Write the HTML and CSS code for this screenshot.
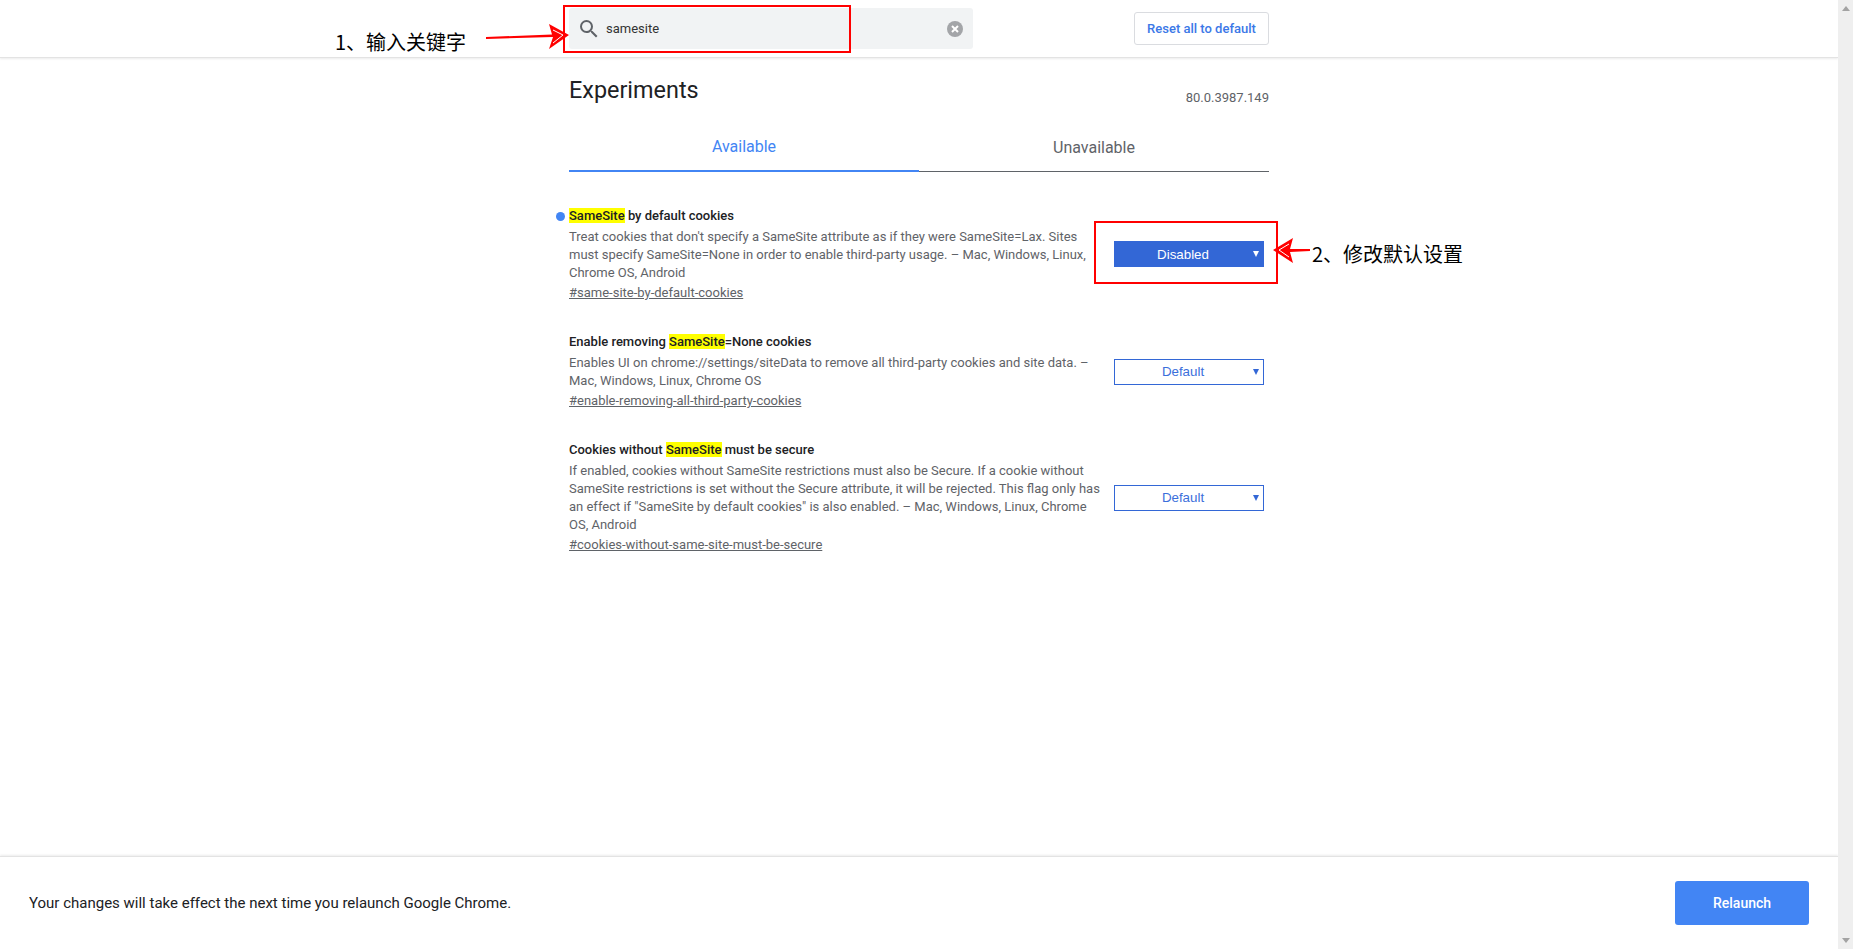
FILE: index.html
```html
<!DOCTYPE html>
<html lang="en">
<head>
  <meta charset="UTF-8">
  <meta name="viewport" content="width=device-width, initial-scale=1.0">
  <title>Experiments</title>
  <link rel="stylesheet" href="styles.css">
</head>
<body>
  <div class="window">
    <div class="page">
      <header class="head">
        <div class="wrap head-row">
          <div class="search">
            <svg class="search-icon" viewBox="0 0 24 24" width="24" height="24"><path d="M15.5 14h-.79l-.28-.27A6.471 6.471 0 0 0 16 9.5 6.5 6.5 0 1 0 9.5 16c1.61 0 3.09-.59 4.23-1.57l.27.28v.79l5 4.99L20.49 19l-4.99-5zm-6 0C7.01 14 5 11.99 5 9.5S7.01 5 9.5 5 14 7.01 14 9.5 11.99 14 9.5 14z"/></svg>
            <span class="search-text">samesite</span>
            <svg class="clear-icon" viewBox="0 0 16 16" width="16" height="16"><circle cx="8" cy="8" r="8"/><path d="M5 5l6 6M11 5l-6 6"/></svg>
          </div>
          <button class="reset" type="button">Reset all to default</button>
        </div>
      </header>

      <main class="wrap content">
        <div class="title-row">
          <h1>Experiments</h1>
          <span class="version">80.0.3987.149</span>
        </div>
        <div class="tabs">
          <div class="tab active">Available</div>
          <div class="tab">Unavailable</div>
        </div>

        <div class="experiments">
          <section class="experiment">
            <div class="info">
              <h2><span class="dot"></span><mark>SameSite</mark> by default cookies</h2>
              <p>Treat cookies that don't specify a SameSite attribute as if they were SameSite=Lax. Sites must specify SameSite=None in order to enable third-party usage. – Mac, Windows, Linux, Chrome OS, Android</p>
              <a href="#same-site-by-default-cookies">#same-site-by-default-cookies</a>
            </div>
            <div class="picker">
              <select class="on">
                <option>Disabled</option>
              </select>
            </div>
          </section>

          <section class="experiment">
            <div class="info">
              <h2>Enable removing <mark>SameSite</mark>=None cookies</h2>
              <p>Enables UI on chrome://settings/siteData to remove all third-party cookies and site data. – Mac, Windows, Linux, Chrome OS</p>
              <a href="#enable-removing-all-third-party-cookies">#enable-removing-all-third-party-cookies</a>
            </div>
            <div class="picker">
              <select>
                <option>Default</option>
              </select>
            </div>
          </section>

          <section class="experiment">
            <div class="info">
              <h2>Cookies without <mark>SameSite</mark> must be secure</h2>
              <p>If enabled, cookies without SameSite restrictions must also be Secure. If a cookie without SameSite restrictions is set without the Secure attribute, it will be rejected. This flag only has an effect if "SameSite by default cookies" is also enabled. – Mac, Windows, Linux, Chrome OS, Android</p>
              <a href="#cookies-without-same-site-must-be-secure">#cookies-without-same-site-must-be-secure</a>
            </div>
            <div class="picker">
              <select>
                <option>Default</option>
              </select>
            </div>
          </section>
        </div>
      </main>

      <footer class="foot">
        <span>Your changes will take effect the next time you relaunch Google Chrome.</span>
        <button class="relaunch" type="button">Relaunch</button>
      </footer>
    </div>

    <div class="scrollbar">
      <span class="arrow-up"></span>
      <span class="arrow-down"></span>
    </div>
  </div>

  <!-- red notes drawn on top of the screenshot -->
  <div class="note-box box-search"></div>
  <div class="note-box box-select"></div>
  <span class="note note-1">1、输入关键字</span>
  <span class="note note-2">2、修改默认设置</span>
  <svg class="note-arrows" width="1853" height="949" viewBox="0 0 1853 949">
    <path class="fill" d="M486 37 L552 34.5 L549 24 L569 35 L549 49 L553 37 L486 39 Z"/>
    <path class="cut" d="M553 30 L563 35 L553 43"/>
    <path class="fill" d="M1310 249 L1290 249 L1293 238 L1273 250 L1293 263 L1290 252 L1310 251 Z"/>
    <path class="cut" d="M1289 244 L1279 250 L1289 257"/>
  </svg>
</body>
</html>
```

FILE: styles.css
```css
* {
  box-sizing: border-box;
}
body {
  margin: 0;
  font-family: Roboto, "Liberation Sans", sans-serif;
  font-size: 13px;
  color: #202124;
  background: #fff;
  overflow: hidden;
}
.window {
  display: flex;
  height: 100vh;
}
.page {
  flex: 1;
  display: flex;
  flex-direction: column;
  min-width: 0;
}
.wrap {
  width: 700px;
  margin: 0 auto;
}

/* top bar */
.head {
  height: 58px;
  padding-top: 8px;
  border-bottom: 1px solid #e3e3e3;
  box-shadow: 0 1px 2px rgba(0, 0, 0, 0.08);
}
.head-row {
  display: flex;
  align-items: center;
  justify-content: space-between;
}
.search {
  display: flex;
  align-items: center;
  width: 404px;
  height: 41px;
  padding: 0 10px 0 8px;
  background: #f1f3f4;
  border-radius: 3px;
}
.search-icon {
  fill: #5f6368;
}
.search-text {
  margin-left: 5px;
  flex: 1;
  color: #333;
}
.clear-icon circle {
  fill: #a3a5a8;
}
.clear-icon path {
  stroke: #fff;
  stroke-width: 2;
  fill: none;
}
.reset {
  width: 135px;
  height: 33px;
  padding: 0;
  font-family: inherit;
  font-size: 13px;
  font-weight: 500;
  color: #3b78e7;
  background: #fff;
  border: 1px solid #dadce0;
  border-radius: 3px;
}

/* heading and tabs */
.title-row {
  display: flex;
  justify-content: space-between;
  align-items: flex-end;
  padding-top: 16px;
}
h1 {
  margin: 0;
  font-size: 23.4px;
  font-weight: 400;
  line-height: 32px;
}
.version {
  line-height: 16px;
  color: #5f6368;
}
.tabs {
  display: flex;
  margin-top: 14px;
}
.tab {
  flex: 1;
  height: 52px;
  padding-top: 18px;
  font-size: 16px;
  line-height: 20px;
  text-align: center;
  color: #5f6368;
  border-bottom: 1px solid #5f6368;
}
.tab.active {
  padding-top: 17px;
  color: #4285f4;
  border-bottom: 2px solid #4285f4;
}

/* flag rows */
.experiments {
  display: flex;
  flex-direction: column;
  gap: 31px;
  padding-top: 35px;
}
.experiment {
  display: flex;
  align-items: center;
  justify-content: space-between;
}
.info {
  width: 532px;
}
h2 {
  position: relative;
  margin: 0 0 2.5px;
  font-size: 13px;
  font-weight: 500;
  line-height: 18px;
}
mark {
  background: #ff0;
  color: inherit;
}
.dot {
  position: absolute;
  left: -13px;
  top: 5px;
  width: 9px;
  height: 9px;
  border-radius: 50%;
  background: #4285f4;
}
.info p {
  margin: 0 0 2.5px;
  line-height: 18px;
  color: #5f6368;
}
.info a {
  display: block;
  line-height: 18px;
  color: #5f6368;
}
.picker {
  position: relative;
  margin-right: 5px;
}
.picker:has(.on) {
  margin-bottom: 1px;
}
.picker::after {
  content: "";
  position: absolute;
  right: 5px;
  top: 10px;
  border-left: 3.5px solid transparent;
  border-right: 3.5px solid transparent;
  border-top: 6px solid #3367d6;
}
.picker select {
  display: block;
  width: 150px;
  height: 26px;
  padding: 0 12px 0 0;
  appearance: none;
  font-family: "Liberation Sans", Arial, sans-serif;
  font-size: 13.33px;
  text-align: center;
  text-align-last: center;
  color: #3b6fdb;
  background: #fff;
  border: 1px solid #3367d6;
  border-radius: 0;
}
.picker select.on {
  color: #fff;
  background: #3367d6;
}
.picker:has(.on)::after {
  border-top-color: #fff;
}

/* bottom bar */
.foot {
  display: flex;
  align-items: center;
  justify-content: space-between;
  height: 93px;
  margin-top: auto;
  padding: 0 29px 0 29px;
  font-size: 15px;
  border-top: 1px solid #e3e3e3;
  box-shadow: 0 -1px 2px rgba(0, 0, 0, 0.08);
}
.relaunch {
  width: 134px;
  height: 44px;
  font-family: inherit;
  font-size: 14px;
  font-weight: 500;
  color: #fff;
  background: #4285f4;
  border: 0;
  border-radius: 3px;
}

/* scrollbar */
.scrollbar {
  display: flex;
  flex-direction: column;
  justify-content: space-between;
  align-items: center;
  width: 15px;
  padding: 6px 0;
  background: #efefef;
}
.arrow-up {
  border-left: 4px solid transparent;
  border-right: 4px solid transparent;
  border-bottom: 5px solid #a3a3a3;
}
.arrow-down {
  border-left: 4px solid transparent;
  border-right: 4px solid transparent;
  border-top: 5px solid #a3a3a3;
}

/* annotations */
.note-box {
  position: absolute;
  border: 2px solid #f00;
}
.box-search {
  left: 563px;
  top: 5px;
  width: 288px;
  height: 48px;
}
.box-select {
  left: 1094px;
  top: 221px;
  width: 184px;
  height: 63px;
}
.note {
  position: absolute;
  font-family: "Noto Sans CJK SC", "Noto Sans", sans-serif;
  font-size: 20px;
  line-height: 28px;
  color: #000;
  white-space: nowrap;
}
.note-1 {
  left: 335px;
  top: 28px;
}
.note-2 {
  left: 1312px;
  top: 240px;
}
.note-arrows {
  position: absolute;
  left: 0;
  top: 0;
  pointer-events: none;
}
.note-arrows .fill {
  fill: #f00;
}
.note-arrows .cut {
  fill: none;
  stroke: #fff;
  stroke-width: 1;
}
```
